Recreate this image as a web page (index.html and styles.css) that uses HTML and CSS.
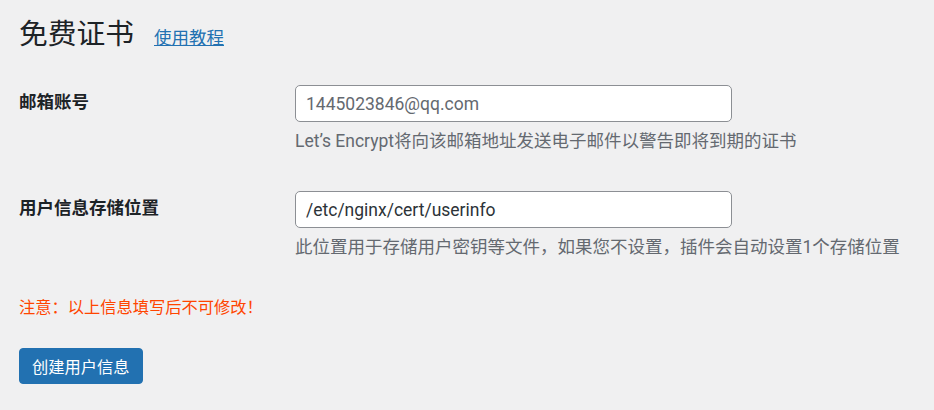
FILE: index.html
```html
<!DOCTYPE html>
<html lang="zh-CN">
<head>
  <meta charset="UTF-8">
  <meta name="viewport" content="width=device-width, initial-scale=1.0">
  <title>免费证书</title>
  <link rel="stylesheet" href="styles.css">
</head>
<body>
  <div class="wrap">
    <div class="titulo">
      <h1>免费证书</h1>
      <a href="#" class="tutorial">使用教程</a>
    </div>

    <form class="form-cert">
      <div class="campo">
        <label for="email">邮箱账号</label>
        <div class="valor">
          <input type="text" id="email" placeholder="1445023846@qq.com">
          <p class="descricao">Let’s Encrypt将向该邮箱地址发送电子邮件以警告即将到期的证书</p>
        </div>
      </div>

      <div class="campo">
        <label for="userinfo">用户信息存储位置</label>
        <div class="valor">
          <input type="text" id="userinfo" value="/etc/nginx/cert/userinfo">
          <p class="descricao">此位置用于存储用户密钥等文件，如果您不设置，插件会自动设置1个存储位置</p>
        </div>
      </div>

      <p class="aviso">注意：以上信息填写后不可修改！</p>

      <button type="button" class="botao">创建用户信息</button>
    </form>
  </div>
</body>
</html>
```

FILE: styles.css
```css
body {
  margin: 0;
  background: #f0f0f1;
  color: #1d2327;
  font-family: Roboto, "Noto Sans CJK SC", sans-serif;
  font-size: 17.5px;
}

.wrap {
  padding: 16px 19px 0;
}

.titulo {
  display: flex;
  align-items: baseline;
  gap: 20px;
}

h1 {
  margin: 0;
  font-size: 28.75px;
  font-weight: 400;
  line-height: 1.3;
}

.tutorial {
  color: #2271b1;
  font-size: 17.5px;
}

.form-cert {
  margin-top: 13px;
}

.campo {
  display: grid;
  grid-template-columns: 276px 1fr;
  padding: 19px 0 18px;
}

.campo label {
  font-weight: 700;
  line-height: 1.3;
  padding-top: 6px;
}

.valor input {
  box-sizing: border-box;
  width: 437px;
  height: 37px;
  margin: 0;
  padding: 0 10px;
  border: 1px solid #8c8f94;
  border-radius: 5px;
  background: #fff;
  color: #2c3338;
  font: inherit;
}

.valor input::placeholder {
  color: #646970;
}

.descricao {
  margin: 6px 0 0;
  color: #646970;
  line-height: 26px;
}

.aviso {
  margin: 17px 0 0;
  color: #ff4500;
  font-size: 16.25px;
  line-height: 26px;
}

.botao {
  margin-top: 27px;
  height: 36px;
  padding: 0 12px;
  border: 1px solid #2271b1;
  border-radius: 4px;
  background: #2271b1;
  color: #fff;
  font-family: inherit;
  font-size: 16.25px;
  cursor: pointer;
}
```
